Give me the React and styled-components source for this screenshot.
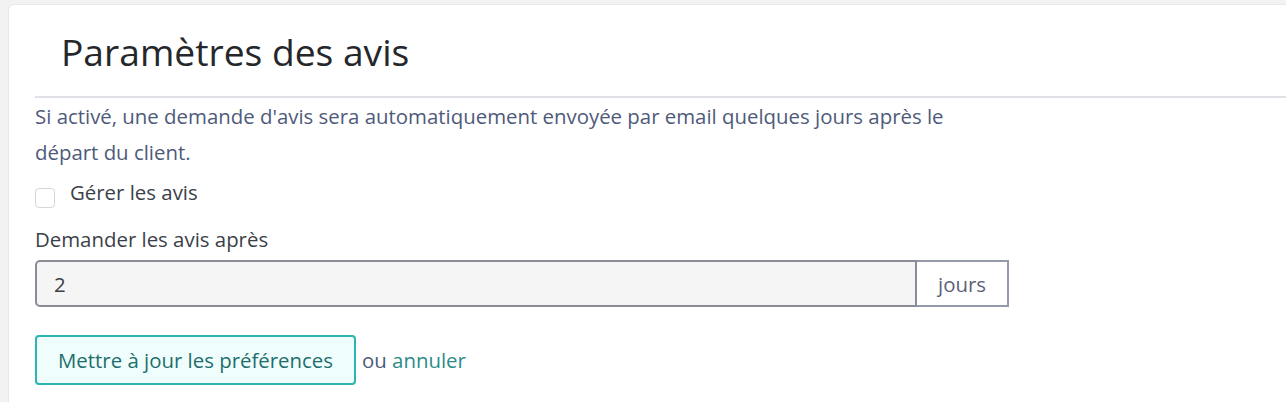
import React from "react";
import styled, { createGlobalStyle } from "styled-components";

const Global = createGlobalStyle`
  html, body { margin: 0; padding: 0; background: #f2f2f3; }
  body { font-family: "Open Sans", "Noto Sans", sans-serif; }
  * { box-sizing: border-box; }
`;

const Page = styled.div`
  padding: 4px 0 0 8px;
  height: 402px;
  overflow: hidden;
`;

const Card = styled.section`
  background: #fff;
  border: 1px solid #e8e8ea;
  border-right: none;
  border-radius: 6px 0 0 0;
  padding: 0 0 40px 26px;
  min-height: 420px;
`;

const Title = styled.h1`
  margin: 0;
  padding: 22px 0 19px 26px;
  font-size: 37.2px;
  font-weight: 400;
  color: #25272b;
  line-height: 50px;
  border-bottom: 2px solid #e0e1e7;
`;

const Intro = styled.p`
  margin: 0;
  max-width: 950px;
  font-size: 20.4px;
  line-height: 36px;
  color: #4e5a7a;
`;

const CheckRow = styled.label`
  display: flex;
  align-items: flex-start;
  gap: 15px;
  margin-top: 9px;
  font-size: 20.4px;
  color: #3b3f48;
  line-height: 26px;
`;

const Box = styled.span`
  width: 20px;
  height: 20px;
  margin-top: 9px;
  border: 1px solid #d5d6da;
  border-radius: 4px;
  background: #fff;
  flex-shrink: 0;
`;

const FieldLabel = styled.div`
  margin-top: 18px;
  font-size: 20.4px;
  line-height: 26px;
  color: #3b3f48;
`;

const InputGroup = styled.div`
  display: flex;
  width: 974px;
  height: 47px;
  margin-top: 8px;
`;

const Input = styled.div`
  flex: 1;
  display: flex;
  align-items: center;
  padding-left: 17px;
  background: #f5f5f5;
  border: 2px solid #8b8d96;
  border-radius: 5px 0 0 5px;
  font-size: 20.4px;
  color: #3b3f48;
`;

const Addon = styled.div`
  width: 92px;
  display: flex;
  align-items: center;
  justify-content: center;
  border: 2px solid #9499ab;
  border-left: none;
  background: #fff;
  font-size: 20.4px;
  color: #5a6178;
`;

const Actions = styled.div`
  display: flex;
  align-items: center;
  gap: 6px;
  margin-top: 28px;
  font-size: 20.4px;
  color: #4e5a7a;
`;

const Button = styled.button`
  height: 50px;
  padding: 0 21px;
  background: #effdfc;
  border: 2px solid #2cb5b1;
  border-radius: 4px;
  font-family: inherit;
  font-size: 20.4px;
  color: #1d6e6c;
  cursor: pointer;
`;

const Link = styled.a`
  color: #2a8c8a;
  text-decoration: none;
`;

export default function App() {
  return (
    <>
      <Global />
      <Page>
        <Card>
          <Title>Paramètres des avis</Title>
          <Intro>
            Si activé, une demande d'avis sera automatiquement envoyée par email quelques jours après le
            départ du client.
          </Intro>
          <CheckRow>
            <Box />
            Gérer les avis
          </CheckRow>
          <FieldLabel>Demander les avis après</FieldLabel>
          <InputGroup>
            <Input>2</Input>
            <Addon>jours</Addon>
          </InputGroup>
          <Actions>
            <Button>Mettre à jour les préférences</Button>
            <span>
              ou <Link href="#">annuler</Link>
            </span>
          </Actions>
        </Card>
      </Page>
    </>
  );
}
